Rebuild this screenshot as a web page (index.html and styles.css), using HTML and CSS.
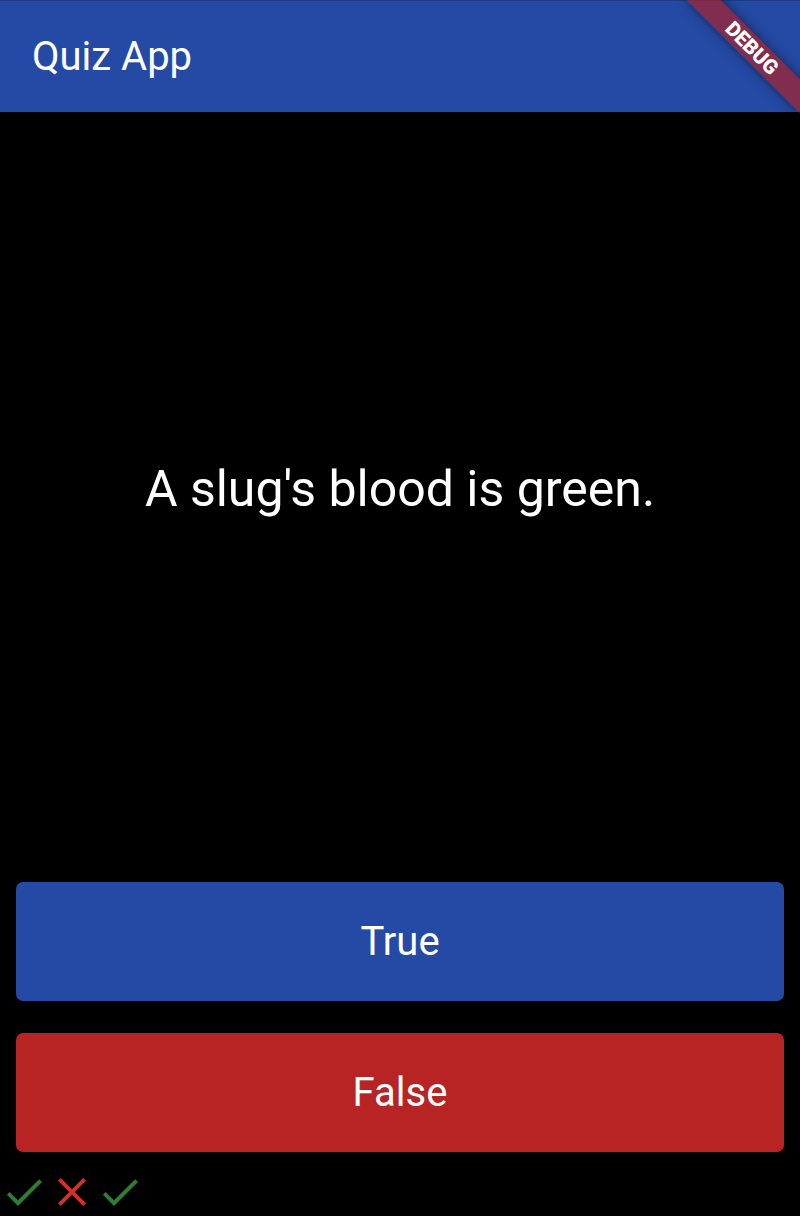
FILE: index.html
```html
<!DOCTYPE html>
<html>
<head>
<meta charset="utf-8">
<title>Quiz App</title>
<link rel="stylesheet" href="styles.css">
</head>
<body>
<div class="screen">
  <header class="app-bar">
    <h1 class="app-title">Quiz App</h1>
  </header>
  <main class="body">
    <section class="question">
      <p class="question-text">A slug's blood is green.</p>
    </section>
    <div class="answer">
      <button class="btn btn-true">True</button>
    </div>
    <div class="answer">
      <button class="btn btn-false">False</button>
    </div>
    <div class="score">
      <svg class="icon icon-check" viewBox="0 0 24 24"><path d="M9 16.17L4.83 12l-1.42 1.41L9 19 21 7l-1.41-1.41z"/></svg>
      <svg class="icon icon-close" viewBox="0 0 24 24"><path d="M19 6.41L17.59 5 12 10.59 6.41 5 5 6.41 10.59 12 5 17.59 6.41 19 12 13.41 17.59 19 19 17.59 13.41 12z"/></svg>
      <svg class="icon icon-check" viewBox="0 0 24 24"><path d="M9 16.17L4.83 12l-1.42 1.41L9 19 21 7l-1.41-1.41z"/></svg>
    </div>
  </main>
  <div class="banner-anchor">
    <div class="banner">DEBUG</div>
  </div>
</div>
</body>
</html>
```

FILE: styles.css
```css
html, body {
  margin: 0;
  padding: 0;
  background: #000;
}

.screen {
  position: relative;
  width: 800px;
  height: 1216px;
  overflow: hidden;
  display: flex;
  flex-direction: column;
  background: #000;
  font-family: Roboto, "Liberation Sans", sans-serif;
  color: #fff;
}

.app-bar {
  flex: 0 0 112px;
  box-sizing: border-box;
  border-top: 1px solid #1c3b85;
  background: #254aa5;
  display: flex;
  align-items: center;
  padding: 0 32px;
}

.app-title {
  margin: 0;
  font-size: 40px;
  font-weight: 400;
  line-height: 1;
  color: #fff;
}

.body {
  flex: 1;
  display: grid;
  grid-template-rows: 5fr 1fr 1fr 48px;
  min-height: 0;
}

.question {
  display: flex;
  align-items: center;
  justify-content: center;
  padding: 0 20px;
}

.question-text {
  margin: 0;
  font-size: 50px;
  line-height: 1.2;
  text-align: center;
  color: #fff;
}

.answer {
  padding: 16px;
  display: flex;
  min-height: 0;
}

.btn {
  flex: 1;
  border: none;
  border-radius: 7px;
  color: #fff;
  font-family: Roboto, "Liberation Sans", sans-serif;
  font-size: 40px;
  font-weight: 400;
  padding: 0;
}

.btn-true {
  background: #254aa5;
}

.btn-false {
  background: #b82324;
}

.score {
  display: flex;
}

.icon {
  width: 48px;
  height: 48px;
  display: block;
}

.icon-check {
  fill: #2e7d32;
}

.icon-close {
  fill: #d32f2f;
}

.banner-anchor {
  position: absolute;
  top: 0;
  right: 0;
  width: 0;
  height: 0;
}

.banner {
  position: absolute;
  left: -80px;
  top: 56px;
  width: 160px;
  height: 24px;
  transform-origin: 80px -56px;
  transform: rotate(45deg);
  background: rgba(183, 28, 28, 0.627);
  box-shadow: 0 0 12px rgba(0, 0, 0, 0.5);
  color: #fff;
  font-family: Roboto, "Liberation Sans", sans-serif;
  font-size: 20.4px;
  font-weight: 900;
  line-height: 24px;
  text-align: center;
}
```
